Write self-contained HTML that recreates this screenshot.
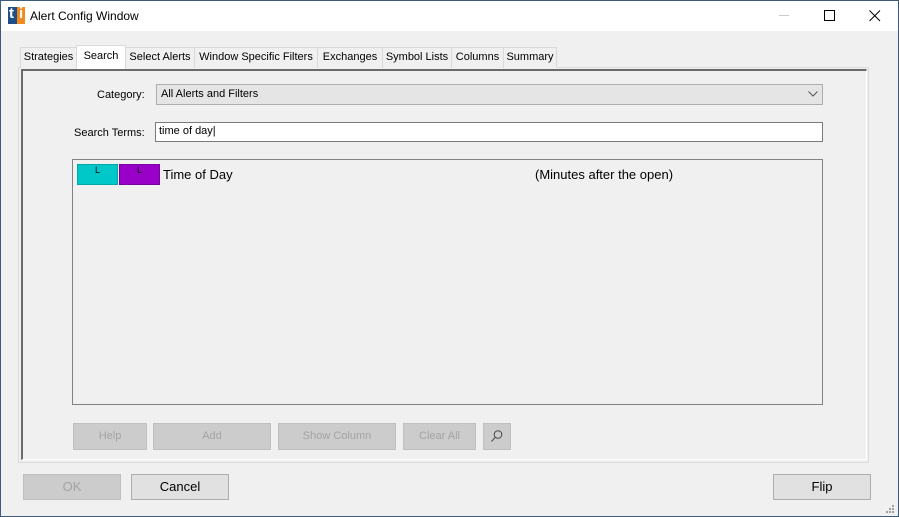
<!DOCTYPE html>
<html><head><style>
*{margin:0;padding:0;box-sizing:border-box}
body{width:899px;height:517px;background:#f0f0f0;font-family:"Liberation Sans",sans-serif;font-size:11px;color:#000;position:relative;overflow:hidden;white-space:nowrap}
.a{position:absolute}
.win{left:0;top:0;width:899px;height:517px;border:1px solid #3d5b78}
.title{left:1px;top:1px;width:897px;height:30px;background:#fff}
.tab{position:absolute;top:47px;height:21px;border:1px solid #d9d9d9;border-bottom:none;background:#f0f0f0;text-align:center;line-height:19px;font-size:11px;white-space:nowrap;overflow:hidden}
.btn{position:absolute;border:1px solid #bfbfbf;background:#cccccc;color:#a3a3a3;text-align:center;font-size:11px}
.big{position:absolute;border:1px solid #adadad;background:#e1e1e1;text-align:center;font-size:13px;line-height:24px}
</style></head><body>
<div class="a win"></div>
<div class="a title"></div>
<div class="a" style="left:8px;top:7px;width:17px;height:17px;background:#1e4f86"></div>
<div class="a" style="left:17px;top:7px;width:8px;height:17px;background:#f08a1c"></div>
<div class="a" style="left:9px;top:5px;color:#fff;font-weight:bold;font-size:15px">t</div>
<div class="a" style="left:19px;top:5px;color:#fff;font-weight:bold;font-size:15px">i</div>
<div class="a" style="left:30px;top:9px;font-size:12px">Alert Config Window</div>
<div class="a" style="left:779px;top:15px;width:10px;height:1px;background:#c8c8c8"></div>
<div class="a" style="left:824px;top:10px;width:11px;height:11px;border:1px solid #000"></div>
<svg class="a" style="left:869px;top:10px" width="12" height="12"><path d="M0.5 0.5L11 11M11 0.5L0.5 11" stroke="#000" stroke-width="1"/></svg>

<div class="a" style="left:18px;top:67px;width:851px;height:396px;border:1px solid #dcdcdc;background:#f0f0f0"></div>
<div class="a" style="left:21px;top:69px;width:846px;height:391px;border-top:2px solid #6a6a6a;border-left:2px solid #6a6a6a;border-right:1px solid #fff;border-bottom:1px solid #fff"></div>

<div class="tab" style="left:20px;width:57px">Strategies</div>
<div class="tab" style="left:76px;top:45px;height:24px;width:50px;background:#fff;z-index:2;line-height:21px">Search</div>
<div class="tab" style="left:125px;width:70px">Select Alerts</div>
<div class="tab" style="left:194px;width:124px">Window Specific Filters</div>
<div class="tab" style="left:317px;width:66px">Exchanges</div>
<div class="tab" style="left:382px;width:70px">Symbol Lists</div>
<div class="tab" style="left:451px;width:53px">Columns</div>
<div class="tab" style="left:503px;width:54px">Summary</div>

<div class="a" style="left:97px;top:89px">Category:</div>
<div class="a" style="left:156px;top:84px;width:667px;height:21px;border:1px solid #adadad;background:#e5e5e5;padding:3px 4px;font-size:11px">All Alerts and Filters</div>
<svg class="a" style="left:808px;top:91px" width="10" height="6"><path d="M0.5 0.5L5 5L9.5 0.5" stroke="#555" fill="none"/></svg>
<div class="a" style="left:74px;top:127px">Search Terms:</div>
<div class="a" style="left:155px;top:122px;width:668px;height:20px;border:1px solid #7a7a7a;background:#fff;padding:2px 3px;font-size:11px">time of day|</div>

<div class="a" style="left:72px;top:159px;width:751px;height:246px;border:1px solid #828282;background:#f0f0f0"></div>
<div class="a" style="left:77px;top:164px;width:41px;height:21px;background:#00c8c8;border:1px solid #00a8a8;text-align:center;font-size:9px">L</div>
<div class="a" style="left:119px;top:164px;width:41px;height:21px;background:#9900c8;border:1px solid #7a00a0;text-align:center;font-size:9px">L</div>
<div class="a" style="left:163px;top:167px;font-size:13px">Time of Day</div>
<div class="a" style="left:535px;top:167px;font-size:13px">(Minutes after the open)</div>

<div class="btn" style="left:73px;top:423px;width:74px;height:27px;line-height:25px">Help</div>
<div class="btn" style="left:153px;top:423px;width:118px;height:27px;line-height:25px">Add</div>
<div class="btn" style="left:278px;top:423px;width:118px;height:27px;line-height:25px">Show Column</div>
<div class="btn" style="left:403px;top:423px;width:73px;height:27px;line-height:25px">Clear All</div>
<div class="btn" style="left:483px;top:423px;width:28px;height:27px"></div>
<svg class="a" style="left:490px;top:429px" width="14" height="14"><circle cx="8" cy="5.5" r="3.8" stroke="#444" fill="none"/><path d="M5.3 8.3L1.5 12.5" stroke="#444"/></svg>

<div class="btn" style="left:23px;top:474px;width:98px;height:26px;line-height:24px;font-size:13px;color:#a3a3a3">OK</div>
<div class="big" style="left:131px;top:474px;width:98px;height:26px">Cancel</div>
<div class="big" style="left:773px;top:474px;width:98px;height:26px">Flip</div>
<svg class="a" style="left:886px;top:505px" width="10" height="10"><g fill="#a0a0a0"><rect x="6" y="0" width="2" height="2"/><rect x="3" y="3" width="2" height="2"/><rect x="6" y="3" width="2" height="2"/><rect x="0" y="6" width="2" height="2"/><rect x="3" y="6" width="2" height="2"/><rect x="6" y="6" width="2" height="2"/></g></svg>
</body></html>
